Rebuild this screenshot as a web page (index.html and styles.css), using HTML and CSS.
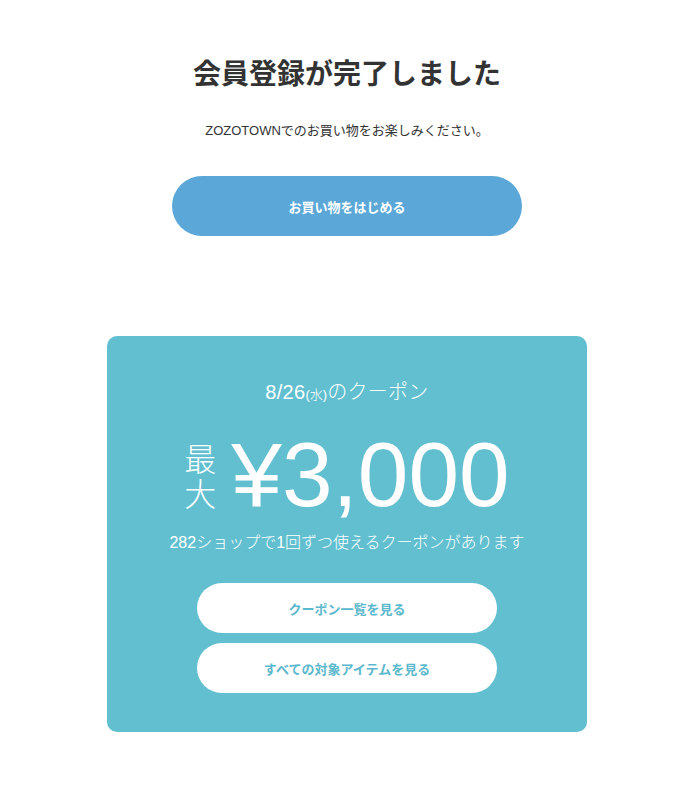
FILE: index.html
```html
<!DOCTYPE html>
<html lang="ja">
<head>
<meta charset="utf-8">
<title>会員登録が完了しました</title>
<link rel="stylesheet" href="styles.css">
</head>
<body>
<main class="page">
  <h1 class="title">会員登録が完了しました</h1>
  <p class="lead">ZOZOTOWNでのお買い物をお楽しみください。</p>
  <a class="btn-primary" href="#">お買い物をはじめる</a>

  <section class="coupon">
    <p class="coupon-date">8/26<span class="dow">(水)</span>のクーポン</p>
    <div class="price-row">
      <div class="max"><span>最</span><span>大</span></div>
      <div class="amount">¥3,000</div>
    </div>
    <p class="coupon-desc">282ショップで1回ずつ使えるクーポンがあります</p>
    <div class="coupon-actions">
      <a class="btn-white" href="#">クーポン一覧を見る</a>
      <a class="btn-white" href="#">すべての対象アイテムを見る</a>
    </div>
  </section>
</main>
</body>
</html>
```

FILE: styles.css
```css
html, body {
  margin: 0;
  padding: 0;
  background: #ffffff;
}
body {
  font-family: "Liberation Sans", "Noto Sans CJK JP", sans-serif;
  color: #333333;
}
.page {
  display: flex;
  flex-direction: column;
  align-items: center;
  padding: 52px 0 0 5px;
}
.title {
  margin: 0;
  font-family: "Noto Sans CJK JP", sans-serif;
  font-size: 28px;
  line-height: 40px;
  font-weight: 700;
  color: #333333;
}
.lead {
  margin: 29px 0 0;
  font-size: 13px;
  line-height: 20px;
  color: #333333;
}
.btn-primary {
  margin-top: 35px;
  width: 350px;
  height: 60px;
  border-radius: 30px;
  background: #5aa7d8;
  color: #ffffff;
  font-family: "Noto Sans CJK JP", sans-serif;
  font-size: 13px;
  font-weight: 700;
  text-decoration: none;
  display: flex;
  align-items: center;
  justify-content: center;
}
.coupon {
  margin-top: 100px;
  width: 480px;
  box-sizing: border-box;
  background: #61bfd0;
  border-radius: 10px;
  padding: 43px 0 39px;
  display: flex;
  flex-direction: column;
  align-items: center;
  color: #ffffff;
}
.coupon-date {
  margin: 0;
  font-size: 20px;
  line-height: 26px;
  font-weight: 300;
  letter-spacing: 0.3px;
}
.dow {
  font-size: 13px;
  letter-spacing: 0;
}
.price-row {
  margin-top: 27px;
  height: 80px;
  display: flex;
  align-items: center;
  gap: 15px;
}
.max {
  display: flex;
  flex-direction: column;
  font-family: "Noto Sans CJK JP", sans-serif;
  font-size: 32px;
  line-height: 35px;
  font-weight: 300;
}
.amount {
  font-family: "Liberation Sans", Arial, sans-serif;
  font-size: 91px;
  line-height: 80px;
  font-weight: 400;
}
.coupon-desc {
  margin: 16px 0 0;
  font-size: 16px;
  line-height: 24px;
  font-weight: 300;
}
.coupon-actions {
  margin-top: 28px;
  display: flex;
  flex-direction: column;
  gap: 10px;
}
.btn-white {
  width: 300px;
  height: 50px;
  border-radius: 25px;
  background: #ffffff;
  color: #5cb8cc;
  font-family: "Noto Sans CJK JP", sans-serif;
  font-size: 13px;
  font-weight: 700;
  text-decoration: none;
  display: flex;
  align-items: center;
  justify-content: center;
}
```
